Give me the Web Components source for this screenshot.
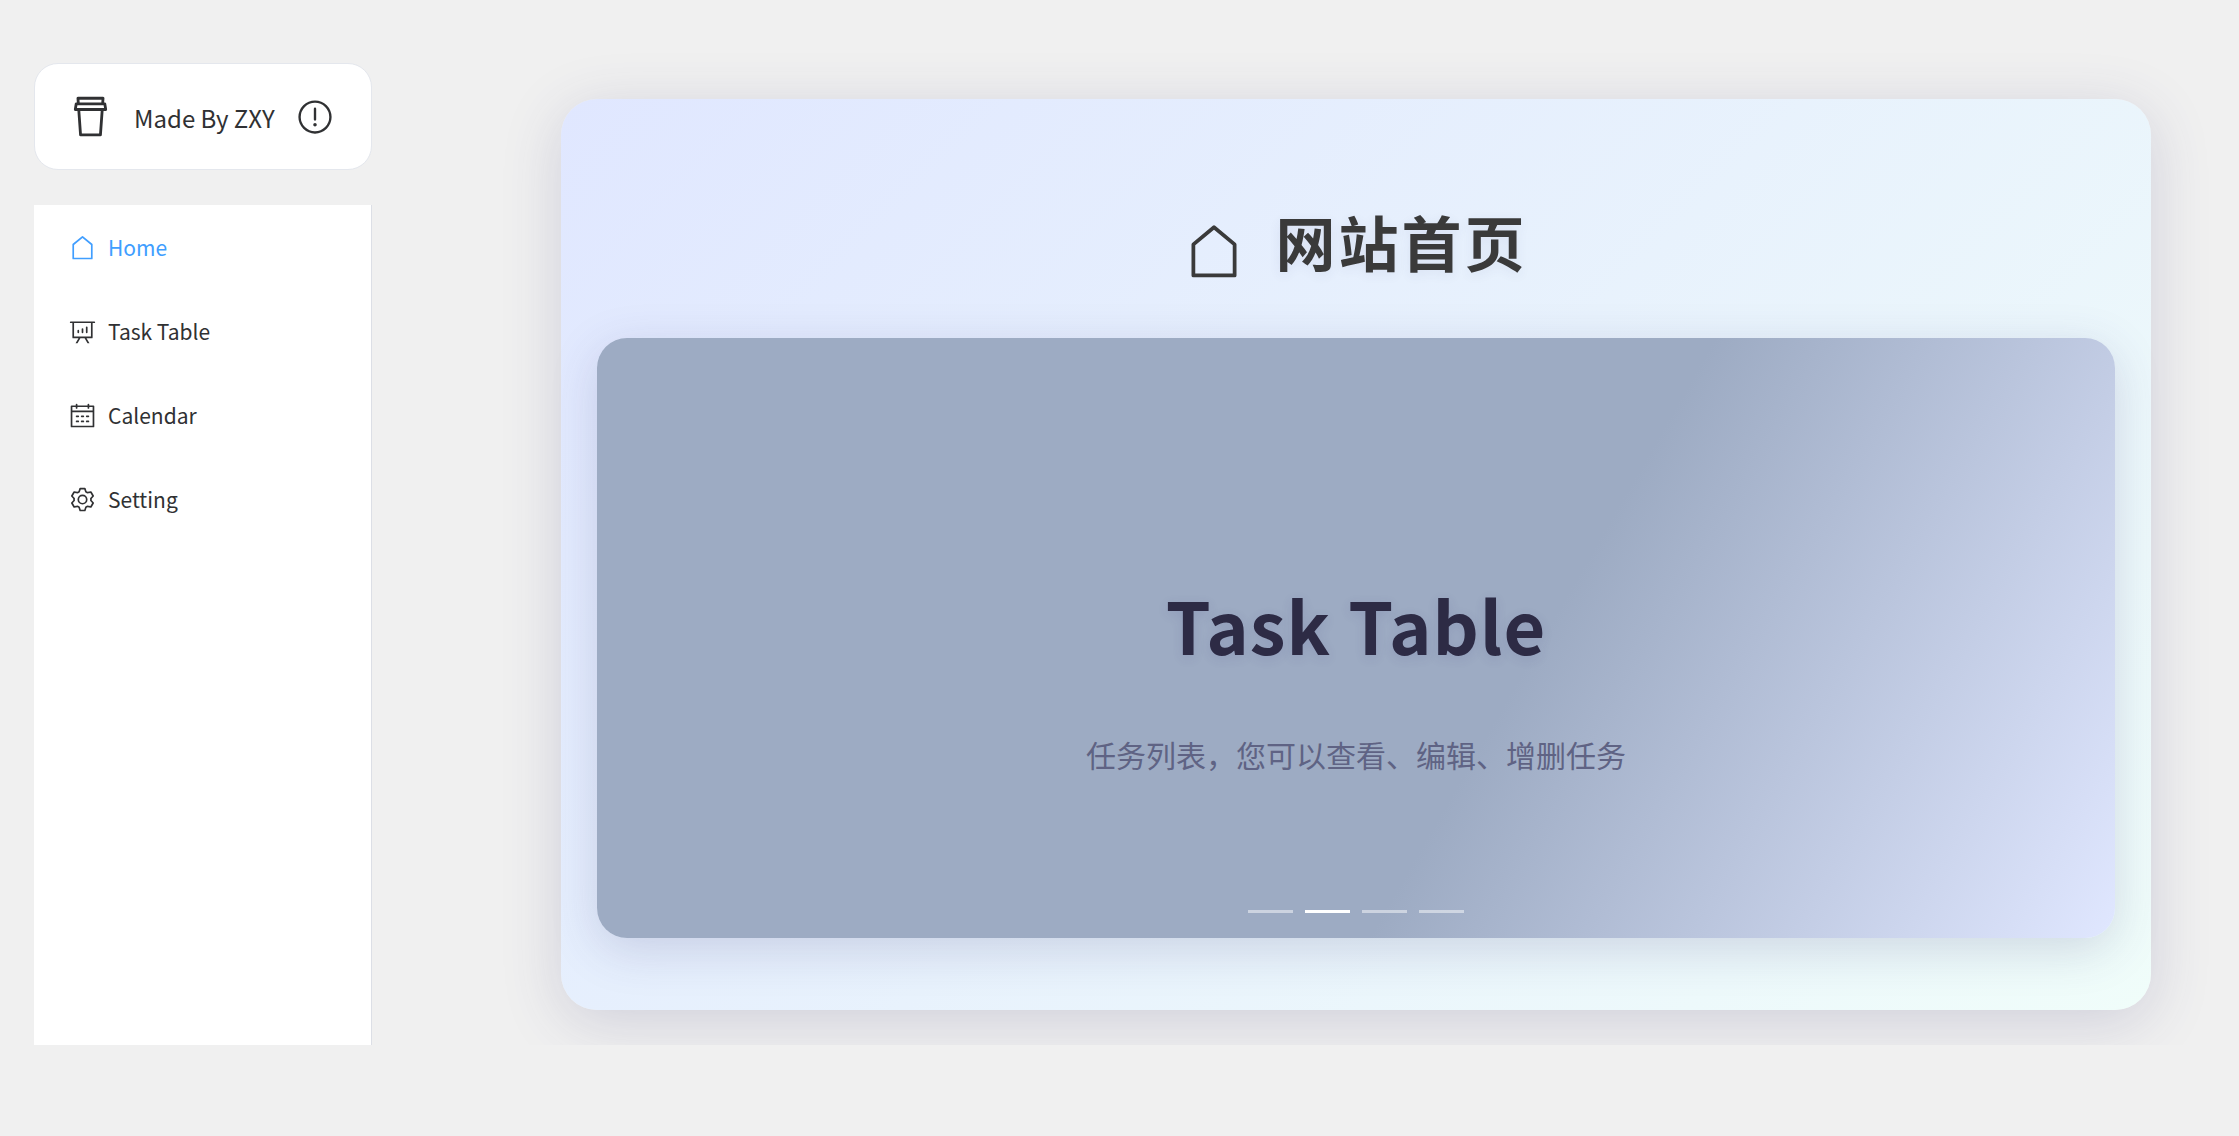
<!DOCTYPE html>
<html lang="zh-CN">
<head>
<meta charset="utf-8">
<title>网站首页</title>
<style>
  html, body { margin: 0; height: 100%; }
  body {
    background: #f0f0f0;
    color: #303133;
    font-family: "Noto Sans CJK SC", "Noto Sans", sans-serif;
  }
</style>
</head>
<body>
<app-shell>
  <brand-card slot="brand">Made By ZXY</brand-card>
  <side-nav slot="nav">
    <nav-item icon="house" active>Home</nav-item>
    <nav-item icon="board">Task Table</nav-item>
    <nav-item icon="calendar">Calendar</nav-item>
    <nav-item icon="setting">Setting</nav-item>
  </side-nav>
  <home-panel>
    <span slot="title">网站首页</span>
    <slide-carousel count="4" current="1">
      <slide-item>
        <span slot="title">Task Table</span>
        <span slot="text">任务列表，您可以查看、编辑、增删任务</span>
      </slide-item>
    </slide-carousel>
  </home-panel>
</app-shell>

<script>
const ICONS = {
  house: 'M192 413.952V896h640V413.952L512 147.328 192 413.952zM139.52 374.4l352-293.312a32 32 0 0 1 40.96 0l352 293.312A32 32 0 0 1 896 398.976V928a32 32 0 0 1-32 32H160a32 32 0 0 1-32-32V398.976a32 32 0 0 1 11.52-24.576z',
  board: 'm665.216 768 110.848 192h-73.856L591.36 768H433.024L322.176 960H248.32l110.848-192H160a32 32 0 0 1-32-32V192H64a32 32 0 0 1 0-64h896a32 32 0 1 1 0 64h-64v544a32 32 0 0 1-32 32H665.216zM832 192H192v512h640V192zM352 448a32 32 0 0 1 32 32v64a32 32 0 0 1-64 0v-64a32 32 0 0 1 32-32zm160-64a32 32 0 0 1 32 32v128a32 32 0 0 1-64 0V416a32 32 0 0 1 32-32zm160-64a32 32 0 0 1 32 32v192a32 32 0 1 1-64 0V352a32 32 0 0 1 32-32z',
  calendar: 'M128 384v512h768V192H768v32a32 32 0 1 1-64 0v-32H320v32a32 32 0 0 1-64 0v-32H128v128h768v64H128zm192-256h384V96a32 32 0 1 1 64 0v32h160a32 32 0 0 1 32 32v768a32 32 0 0 1-32 32H96a32 32 0 0 1-32-32V160a32 32 0 0 1 32-32h160V96a32 32 0 0 1 64 0v32zm-32 384h64a32 32 0 0 1 0 64h-64a32 32 0 0 1 0-64zm0 192h64a32 32 0 1 1 0 64h-64a32 32 0 1 1 0-64zm192-192h64a32 32 0 0 1 0 64h-64a32 32 0 0 1 0-64zm0 192h64a32 32 0 1 1 0 64h-64a32 32 0 1 1 0-64zm192-192h64a32 32 0 1 1 0 64h-64a32 32 0 1 1 0-64zm0 192h64a32 32 0 1 1 0 64h-64a32 32 0 1 1 0-64z',
  setting: 'M600.704 64a32 32 0 0 1 30.464 22.208l35.2 109.376c14.784 7.232 28.928 15.36 42.432 24.512l112.384-24.192a32 32 0 0 1 34.432 15.36L944.32 364.8a32 32 0 0 1-4.032 37.504l-77.12 85.12a357.12 357.12 0 0 1 0 49.024l77.12 85.248a32 32 0 0 1 4.032 37.504l-88.704 153.6a32 32 0 0 1-34.432 15.296L708.8 803.904c-13.44 9.088-27.648 17.28-42.368 24.512l-35.264 109.376A32 32 0 0 1 600.704 960H423.296a32 32 0 0 1-30.464-22.208L357.696 828.48a351.616 351.616 0 0 1-42.56-24.64l-112.32 24.256a32 32 0 0 1-34.432-15.36L79.68 659.2a32 32 0 0 1 4.032-37.504l77.12-85.248a357.12 357.12 0 0 1 0-48.896l-77.12-85.248A32 32 0 0 1 79.68 364.8l88.704-153.6a32 32 0 0 1 34.432-15.296l112.32 24.256c13.568-9.152 27.776-17.408 42.56-24.64l35.2-109.312A32 32 0 0 1 423.232 64H600.64zm-23.424 64H446.72l-36.352 113.088-24.512 11.968a294.113 294.113 0 0 0-34.816 20.096l-22.656 15.36-116.224-25.088-65.28 113.152 79.68 88.192-1.92 27.136a293.12 293.12 0 0 0 0 40.192l1.92 27.136-79.808 88.192 65.344 113.152 116.224-25.024 22.656 15.296a294.113 294.113 0 0 0 34.816 20.096l24.512 11.968L446.72 896h130.688l36.48-113.152 24.448-11.904a288.282 288.282 0 0 0 34.752-20.096l22.592-15.296 116.288 25.024 65.28-113.152-79.744-88.192 1.92-27.136a293.12 293.12 0 0 0 0-40.256l-1.92-27.136 79.808-88.128-65.344-113.152-116.288 24.96-22.592-15.232a287.616 287.616 0 0 0-34.752-20.096l-24.448-11.904L577.344 128zM512 320a192 192 0 1 1 0 384 192 192 0 0 1 0-384zm0 64a128 128 0 1 0 0 256 128 128 0 0 0 0-256z',
  cup: 'M822.592 192h14.272a32 32 0 0 1 31.616 26.752l21.312 128A32 32 0 0 1 858.24 384h-49.344l-39.04 546.304A32 32 0 0 1 737.92 960H285.824a32 32 0 0 1-32-29.696L214.912 384H165.76a32 32 0 0 1-31.552-37.248l21.312-128A32 32 0 0 1 187.136 192h14.016l-6.72-93.696A32 32 0 0 1 226.368 64h571.008a32 32 0 0 1 31.936 34.304L822.592 192zm-64.128 0 4.544-64H260.736l4.544 64h493.184zm-548.16 128H820.48l-10.688-64H214.208l-10.688 64h6.784zm68.736 64 36.544 512H708.16l36.544-512H279.04z',
  warning: 'M512 64a448 448 0 1 1 0 896 448 448 0 0 1 0-896zm0 832a384 384 0 0 0 0-768 384 384 0 0 0 0 768zm48-176a48 48 0 1 1-96 0 48 48 0 0 1 96 0zm-48-464a32 32 0 0 1 32 32v288a32 32 0 0 1-64 0V288a32 32 0 0 1 32-32z'
};

function define(name, render) {
  customElements.define(name, class extends HTMLElement {
    constructor() {
      super();
      this.attachShadow({ mode: 'open' });
    }
    connectedCallback() {
      this.shadowRoot.innerHTML = render(this);
    }
  });
}

define('line-icon', el => `
  <style>
    :host { display: block; flex: none; width: var(--icon-size, 27px); height: var(--icon-size, 27px); }
    svg { display: block; width: 100%; height: 100%; fill: currentColor; }
  </style>
  <svg viewBox="0 0 1024 1024" aria-hidden="true"><path d="${ICONS[el.getAttribute('name')]}"/></svg>`);

define('app-shell', () => `
  <style>
    :host { display: flex; box-sizing: border-box; height: 92vh; padding-left: 34px; gap: 101px; overflow: hidden; }
    aside { display: flex; flex-direction: column; flex: none; width: 338px; padding-top: 63px; gap: 35px; box-sizing: border-box; }
    ::slotted(side-nav) { flex: 1; }
    main { flex: 1; min-width: 0; padding-top: 99px; }
  </style>
  <aside><slot name="brand"></slot><slot name="nav"></slot></aside>
  <main><slot></slot></main>`);

define('brand-card', () => `
  <style>
    :host { display: flex; align-items: center; box-sizing: border-box; height: 107px; padding: 0 33px;
      background: #fff; border: 1px solid #e4e7ed; border-radius: 24px; font-size: 24px; line-height: 40px; }
    .cup { --icon-size: 45px; }
    .name { margin: 0 21px; padding-top: 2px; white-space: nowrap; }
    button { display: block; padding: 0; border: 0; background: none; color: inherit; --icon-size: 38px; cursor: pointer; }
  </style>
  <line-icon class="cup" name="cup"></line-icon>
  <span class="name"><slot></slot></span>
  <button aria-label="关于"><line-icon name="warning"></line-icon></button>`);

define('side-nav', () => `
  <style>
    :host { display: block; background: #fff; border-right: 1px solid #dcdfe6; }
    nav { display: flex; flex-direction: column; }
  </style>
  <nav><slot></slot></nav>`);

define('nav-item', el => `
  <style>
    :host { display: block; color: #303133; }
    :host([active]) { color: #409eff; }
    a { display: flex; align-items: center; height: 84px; padding: 0 35px; gap: 12px;
      color: inherit; text-decoration: none; font-size: 21px; line-height: 32px; }
  </style>
  <a href="#${el.getAttribute('icon')}"><line-icon name="${el.getAttribute('icon')}"></line-icon><slot></slot></a>`);

define('home-panel', () => `
  <style>
    :host { display: block; box-sizing: border-box; width: 90%; margin: 0 auto; padding: 36px 36px 72px;
      border-radius: 36px; background: linear-gradient(135deg, #e0e7ff 0%, #f0fdfa 100%);
      box-shadow: 0 12px 60px rgba(60, 60, 120, 0.18); }
    h1 { display: flex; justify-content: center; align-items: flex-end; gap: 31px; margin: 0; padding: 66px 0 57px;
      color: #3a3a3a; font-size: 60px; line-height: 80px; font-weight: 700; letter-spacing: 3px;
      text-shadow: 0 3px 12px rgba(60, 60, 120, 0.08); --icon-size: 60px; }
  </style>
  <h1><line-icon name="house"></line-icon><slot name="title"></slot></h1>
  <slot></slot>`);

define('slide-carousel', el => {
  const count = Number(el.getAttribute('count'));
  const current = Number(el.getAttribute('current'));
  const dots = Array.from({ length: count }, (_, i) =>
    `<button aria-label="${i + 1}"${i === current ? ' aria-current="true"' : ''}></button>`).join('');
  return `
  <style>
    :host { display: block; position: relative; height: 600px; border-radius: 30px;
      box-shadow: 0 12px 48px rgba(60, 60, 120, 0.18); }
    .dots { position: absolute; left: 0; right: 0; bottom: 25px; display: flex; justify-content: center; gap: 12px; }
    button { width: 45px; height: 3px; padding: 0; border: 0; background: #fff; opacity: 0.48; cursor: pointer; }
    button[aria-current] { opacity: 1; }
  </style>
  <slot></slot>
  <div class="dots">${dots}</div>`;
});

define('slide-item', () => `
  <style>
    :host { display: flex; flex-direction: column; align-items: center; justify-content: center; gap: 54px;
      box-sizing: border-box; height: 100%; padding-top: 70px; border-radius: 30px; text-align: center;
      background: linear-gradient(120deg, #9dabc3 60%, #e0e7ff 100%); }
    h2 { margin: 0; color: #2d2b45; font-size: 72px; line-height: 108px; font-weight: 700; letter-spacing: 1px;
      text-shadow: 0 3px 12px rgba(60, 60, 120, 0.12); }
    p { margin: 0; color: #5f6384; font-size: 30px; line-height: 44px; }
  </style>
  <h2><slot name="title"></slot></h2>
  <p><slot name="text"></slot></p>`);
</script>
</body>
</html>
